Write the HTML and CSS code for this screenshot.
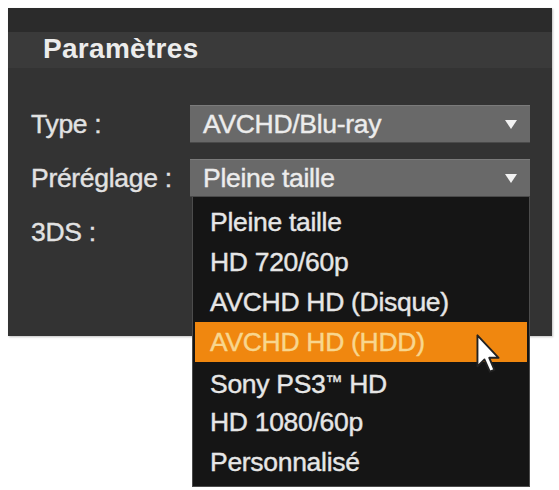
FILE: index.html
```html
<!DOCTYPE html>
<html lang="fr">
<head>
<meta charset="utf-8">
<title>Paramètres</title>
<link rel="stylesheet" href="styles.css">
</head>
<body>
<div class="page">
  <div class="panel">
    <div class="panel-top"></div>
    <div class="panel-title">Paramètres</div>
    <div class="panel-body">
      <div class="row">
        <span class="label">Type :</span>
        <div class="select"><span>AVCHD/Blu-ray</span><span class="arrow"></span></div>
      </div>
      <div class="row">
        <span class="label">Préréglage :</span>
        <div class="select"><span>Pleine taille</span><span class="arrow"></span></div>
      </div>
      <div class="row">
        <span class="label">3DS :</span>
      </div>
    </div>
    <ul class="menu">
      <li>Pleine taille</li>
      <li>HD 720/60p</li>
      <li>AVCHD HD (Disque)</li>
      <li class="active">AVCHD HD (HDD)</li>
      <li>Sony PS3<span class="tm">™</span> HD</li>
      <li>HD 1080/60p</li>
      <li>Personnalisé</li>
    </ul>
    <svg class="cursor" viewBox="0 0 13 21" width="25" height="40">
      <path d="M0.7 0.7 L0.7 17 L4.4 13.4 L7.2 19.8 L9.6 18.8 L6.9 12.5 L11.8 12.5 Z" fill="#ffffff" stroke="#222222" stroke-width="1" stroke-linejoin="round"/>
    </svg>
  </div>
</div>
</body>
</html>
```

FILE: styles.css
```css
html, body {
  margin: 0;
  padding: 0;
  background: #ffffff;
}

body {
  font-family: "Liberation Sans", Arial, sans-serif;
}

.page {
  min-height: 490px;
  padding: 8px 0 0 8px;
  box-sizing: border-box;
}

.panel {
  position: relative;
  width: 544px;
  height: 328px;
  background: #333333;
  box-shadow: 1px 1px 2px rgba(0, 0, 0, 0.25);
}

.panel-top {
  height: 24px;
  background: #2b2b2b;
}

.panel-title {
  height: 36px;
  padding-left: 35px;
  background: #3a3a3a;
  color: #ececec;
  font-weight: bold;
  font-size: 28px;
  line-height: 34px;
  letter-spacing: 0.3px;
}

.panel-body {
  padding: 37px 0 0 23px;
  display: flex;
  flex-direction: column;
  gap: 16px;
}

.row {
  display: flex;
  align-items: center;
  height: 38px;
}

.label {
  width: 159px;
  color: #e2e2e2;
  font-size: 26.5px;
  letter-spacing: -0.3px;
  -webkit-text-stroke: 0.4px currentColor;
}

.select {
  box-sizing: border-box;
  width: 340px;
  height: 38px;
  display: flex;
  align-items: center;
  justify-content: space-between;
  padding: 0 13px;
  background: #696969;
  border-top: 1px solid #7b7b7b;
  border-bottom: 1px solid #4a4a4a;
  color: #ececec;
  font-size: 26.5px;
  letter-spacing: -0.3px;
  -webkit-text-stroke: 0.4px currentColor;
}

.arrow {
  width: 0;
  height: 0;
  border-left: 6px solid transparent;
  border-right: 6px solid transparent;
  border-top: 9px solid #f2f2f2;
}

.menu {
  position: absolute;
  left: 184px;
  top: 189px;
  width: 338px;
  height: 290px;
  box-sizing: border-box;
  margin: 0;
  padding: 5px 2px;
  list-style: none;
  background: #151515;
  border: 1px solid #4c4c4c;
  border-top: none;
}

.menu li {
  height: 40px;
  line-height: 40px;
  padding-left: 15px;
  color: #e6e6e6;
  font-size: 26.5px;
  letter-spacing: -0.3px;
  -webkit-text-stroke: 0.4px currentColor;
  white-space: nowrap;
}

.menu li.active {
  background: #f0870f;
  color: #f8d68e;
}

.tm {
  font-size: 17px;
  vertical-align: 6px;
}

.cursor {
  position: absolute;
  left: 468px;
  top: 326px;
}
```
